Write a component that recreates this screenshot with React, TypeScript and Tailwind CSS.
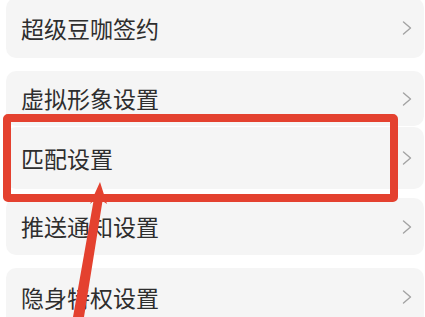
import React from "react";

const Chevron = () => (
  <svg width="10" height="14" viewBox="0 0 10 14" fill="none" className="shrink-0">
    <path d="M1.5 1 L8.5 7 L1.5 13" stroke="#a3a3a3" strokeWidth="1.4" strokeLinecap="round" strokeLinejoin="round" />
  </svg>
);

const Row = ({ label, cls }: { label: string; cls: string }) => (
  <div className={`flex items-center justify-between rounded-[10px] bg-[#f5f5f5] pl-[15px] pr-[12px] ${cls}`}>
    <span className="text-[23px] leading-none text-[#2e2e2e]">{label}</span>
    <Chevron />
  </div>
);

export default function App() {
  return (
    <div
      className="relative h-[317px] w-[425px] overflow-hidden bg-white"
      style={{ fontFamily: '"Noto Sans CJK SC", "Noto Sans", sans-serif' }}
    >
      <div className="flex flex-col pl-[6px] pr-[1px]">
        <Row label="超级豆咖签约" cls="-mt-[2px] h-[60px]" />
        <Row label="虚拟形象设置" cls="mt-[13px] h-[55px]" />
        <Row label="匹配设置" cls="mt-[1px] h-[62px]" />
        <Row label="推送通知设置" cls="mt-[9px] h-[57px]" />
        <Row label="隐身特权设置" cls="mt-[13px] h-[58px]" />
      </div>

      <div className="absolute left-[3px] top-[114px] h-[88px] w-[395px] rounded-[5px] border-[8px] border-[#e4412f]" />

      <svg className="absolute left-0 top-0" width="425" height="317" viewBox="0 0 425 317">
        <polygon
          points="100,182 107,204 102.5,201 84,317 73,317 93.5,201 90,204"
          fill="#e4412f"
        />
      </svg>
    </div>
  );
}
